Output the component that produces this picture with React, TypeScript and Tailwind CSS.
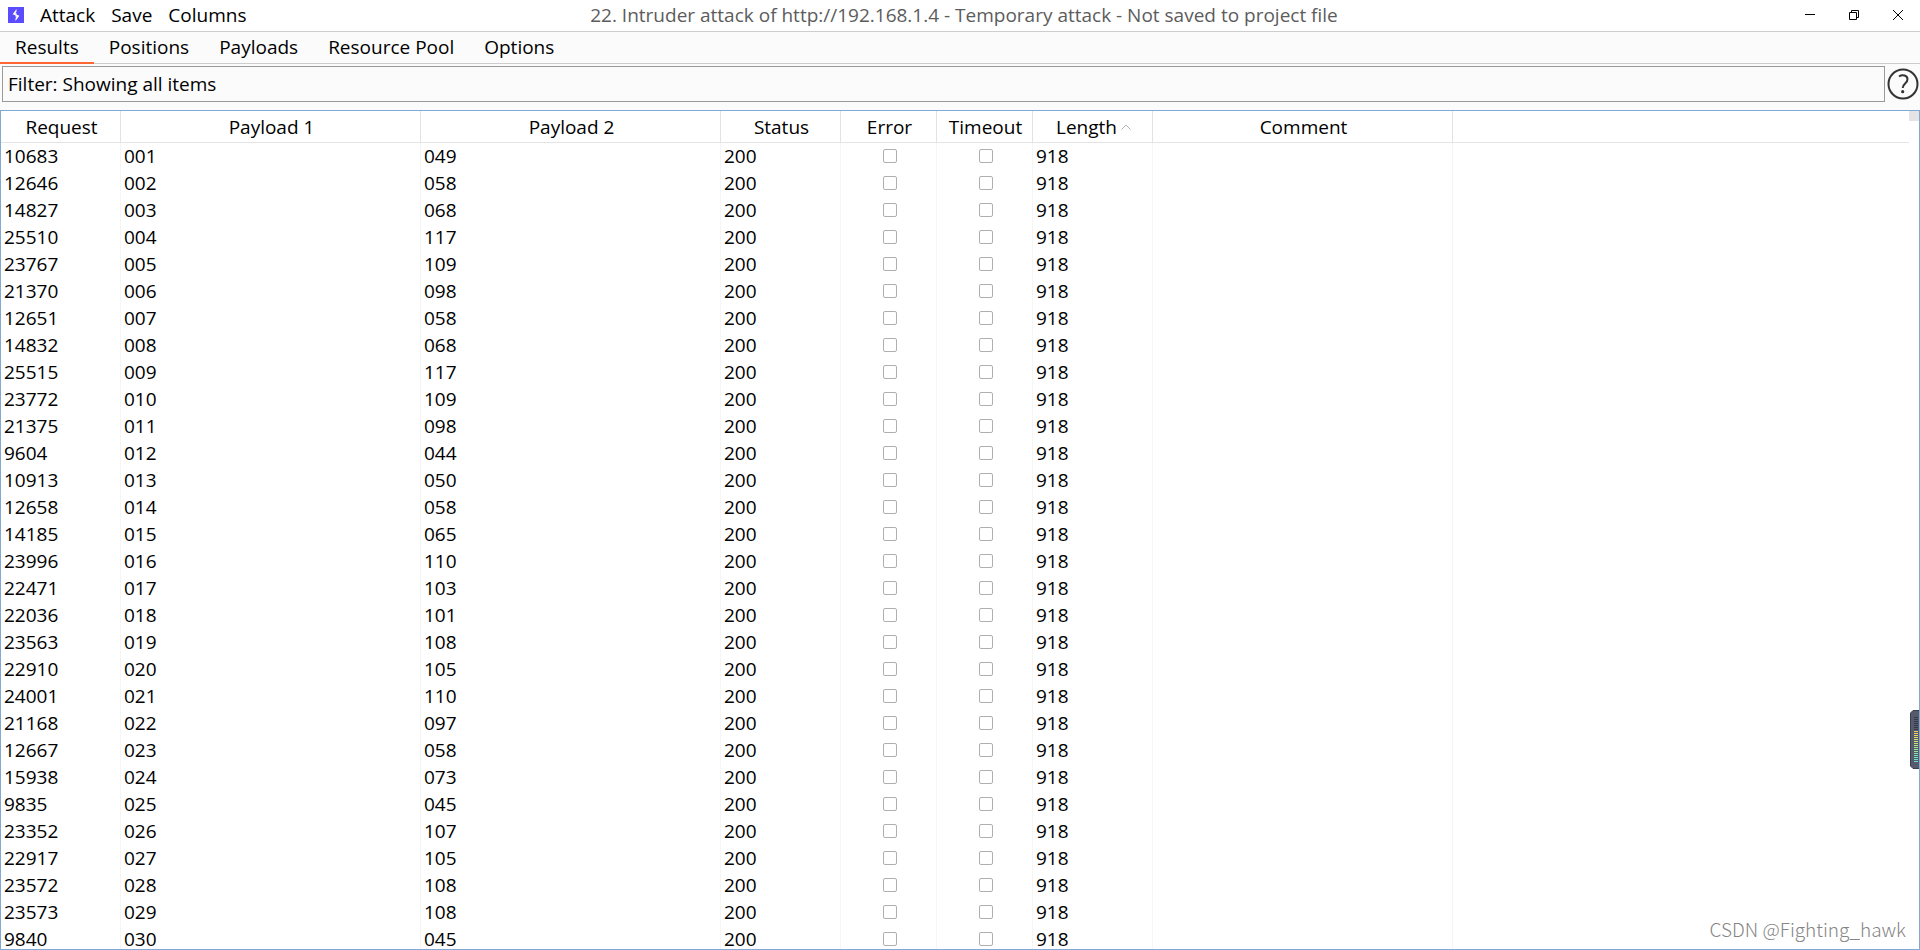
import { useState } from "react";

const menus = ["Attack", "Save", "Columns"];
const tabs = ["Results", "Positions", "Payloads", "Resource Pool", "Options"];

const columns = [
  { name: "Request", width: "w-30" },
  { name: "Payload 1", width: "w-75" },
  { name: "Payload 2", width: "w-75" },
  { name: "Status", width: "w-30" },
  { name: "Error", width: "w-24" },
  { name: "Timeout", width: "w-24" },
  { name: "Length", width: "w-30", sorted: true },
  { name: "Comment", width: "w-75" },
];

// request number, payload 2 (payload 1 is the running index)
const results: [string, string][] = [
  ["10683", "049"],
  ["12646", "058"],
  ["14827", "068"],
  ["25510", "117"],
  ["23767", "109"],
  ["21370", "098"],
  ["12651", "058"],
  ["14832", "068"],
  ["25515", "117"],
  ["23772", "109"],
  ["21375", "098"],
  ["9604", "044"],
  ["10913", "050"],
  ["12658", "058"],
  ["14185", "065"],
  ["23996", "110"],
  ["22471", "103"],
  ["22036", "101"],
  ["23563", "108"],
  ["22910", "105"],
  ["24001", "110"],
  ["21168", "097"],
  ["12667", "058"],
  ["15938", "073"],
  ["9835", "045"],
  ["23352", "107"],
  ["22917", "105"],
  ["23572", "108"],
  ["23573", "108"],
  ["9840", "045"],
];

const meterColors = [
  "#34384a", "#34384a", "#34384a", "#34384a", "#34384a", "#34384a", "#34384a",
  "#f0cc5c", "#f0d060", "#ecd868", "#e4dc6c", "#dce070", "#d0e478", "#c4e47c",
  "#b8e484", "#ace48c", "#a0e494", "#94e49c", "#88e4a8", "#7ce4b4", "#74e4c0",
  "#6ce0c8", "#68e0d0",
];

function BurpLogo() {
  return (
    <svg width="16" height="16" viewBox="0 0 16 16" aria-hidden="true">
      <rect width="16" height="16" fill="#5b4dff" />
      <path d="M8.500 2 4.600 7.300l3.900 1.500V6.200H7.300l1.200-1.500z" fill="#fff" />
      <path d="M7.500 14l3.900-5.300-3.900-1.500v2.600h1.200l-1.200 1.500z" fill="#fff" />
    </svg>
  );
}

function TitleBar() {
  return (
    <header className="flex h-8 shrink-0 items-center border-b border-[#cdcdcd] bg-white pb-px pl-2">
      <div className="flex flex-1 items-center gap-4">
        <BurpLogo />
        <nav className="flex gap-4">
          {menus.map((menu) => (
            <button key={menu} type="button">{menu}</button>
          ))}
        </nav>
      </div>
      <h1 className="text-[#5c5c5c]">
        22. Intruder attack of http://192.168.1.4 - Temporary attack - Not saved to project file
      </h1>
      <div className="flex flex-1 justify-end">
        <button type="button" aria-label="Minimize" className="flex h-7 w-11 items-center justify-center">
          <svg width="10" height="10" viewBox="0 0 10 10"><path d="M0 4.500h10" stroke="#000" /></svg>
        </button>
        <button type="button" aria-label="Restore" className="flex h-7 w-11 items-center justify-center">
          <svg width="10" height="10" viewBox="0 0 10 10" fill="none" stroke="#000">
            <path d="M.5 2.500h7v7h-7zM2.500 2.500v-2h7v7h-2" />
          </svg>
        </button>
        <button type="button" aria-label="Close" className="flex h-7 w-11 items-center justify-center">
          <svg width="10" height="10" viewBox="0 0 10 10"><path d="M0 0l10 10M10 0L0 10" stroke="#000" /></svg>
        </button>
      </div>
    </header>
  );
}

function ResultsTable() {
  return (
    <div className="flex min-h-0 flex-1 overflow-hidden border border-[#82a9d6] bg-white">
      <div className="min-w-0 flex-1">
        <table className="w-full table-fixed border-separate border-spacing-0">
          <thead>
            <tr className="h-8">
              {columns.map((col) => (
                <th
                  key={col.name}
                  scope="col"
                  className={`${col.width} border-r border-b border-[#e3e3e3] p-0 pl-0.5 font-normal`}
                >
                  <span className="flex items-center justify-center gap-1">
                    {col.name}
                    {col.sorted && (
                      <svg width="10" height="6" viewBox="0 0 10 6" fill="none" aria-hidden="true">
                        <path d="M.5 5.500 5 1l4.500 4.500" stroke="#b4b4b4" />
                      </svg>
                    )}
                  </span>
                </th>
              ))}
              <td className="border-b border-[#e3e3e3] p-0" />
            </tr>
          </thead>
          <tbody className="leading-5">
            {results.map(([request, payload], i) => (
              <tr key={request} className="h-[27px] *:border-r *:border-[#f5f5f5] *:pb-0.5 *:pl-[3px]">
                <td>{request}</td>
                <td>{String(i + 1).padStart(3, "0")}</td>
                <td>{payload}</td>
                <td>200</td>
                <ResultFlag label={`Error, request ${request}`} />
                <ResultFlag label={`Timeout, request ${request}`} />
                <td>918</td>
                <td />
              </tr>
            ))}
          </tbody>
        </table>
      </div>
      <div className="w-[10px] shrink-0">
        <div className="h-[10px] bg-[#e4e4e4]" />
      </div>
    </div>
  );
}

function ResultFlag({ label }: { label: string }) {
  return (
    <td>
      <input
        type="checkbox"
        aria-label={label}
        className="mx-auto mt-px block size-[14px] appearance-none rounded-xs border border-[#afafaf] bg-white"
      />
    </td>
  );
}

function LevelMeter() {
  return (
    <svg
      className="absolute top-[710px] right-0"
      width="10"
      height="60"
      viewBox="0 0 10 60"
      aria-hidden="true"
    >
      <path d="M10 .5H3L.5 3v53L3 58.500h7z" fill="#555b6b" stroke="#3a3f4c" />
      {meterColors.map((color, i) => (
        <rect key={i} x="4" y={7 + i * 2} width="4" height="1" fill={color} />
      ))}
      <path d="M9.500 0v60" stroke="#82a9d6" />
    </svg>
  );
}

export default function App() {
  const [activeTab, setActiveTab] = useState("Results");

  return (
    <div className="relative flex h-screen flex-col overflow-hidden bg-[#fbfbfb] font-['Open_Sans',sans-serif] text-[19px] leading-6 text-black">
      <TitleBar />

      <div role="tablist" className="flex h-8 shrink-0 border-b border-[#cdcdcd]">
        {tabs.map((tab) => (
          <button
            key={tab}
            type="button"
            role="tab"
            aria-selected={activeTab === tab}
            onClick={() => setActiveTab(tab)}
            className={`-mb-px h-8 border-b-2 px-[15px] ${activeTab === tab ? "border-[#ff6633]" : "border-transparent"}`}
          >
            {tab}
          </button>
        ))}
      </div>

      {/* Filter bar */}
      <div className="flex shrink-0 items-center gap-0.5 pt-0.5 pr-px pb-2 pl-0.5">
        <button type="button" className="h-9 flex-1 border border-[#999] px-[5px] text-left">
          Filter: Showing all items
        </button>
        <button type="button" aria-label="Help">
          <svg width="32" height="32" viewBox="0 0 32 32" fill="none" stroke="#333" strokeWidth="2">
            <circle cx="16" cy="16" r="14.500" />
            <path d="M12 8.500c3.500-2.500 8.500-1 8.500 2.700 0 4.300-4.800 4.300-4.800 8.800" />
            <circle cx="15.700" cy="23.700" r="1.600" fill="#333" stroke="none" />
          </svg>
        </button>
      </div>

      <ResultsTable />
      <LevelMeter />
      <div className="absolute right-[14px] bottom-[9px] font-['Noto_Sans_CJK_SC',sans-serif] text-[19px] font-light text-[#858585]">
        CSDN @Fighting_hawk
      </div>
    </div>
  );
}
